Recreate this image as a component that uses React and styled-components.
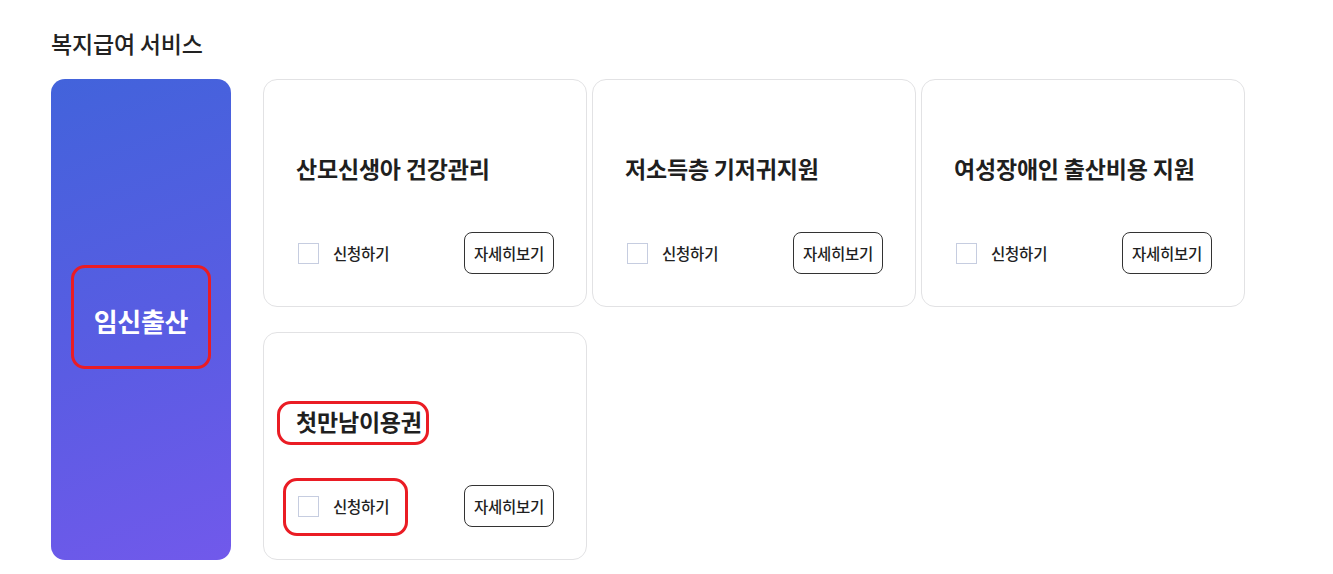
import React from "react";
import styled, { createGlobalStyle, css } from "styled-components";

const GlobalStyle = createGlobalStyle`
  html, body { margin: 0; padding: 0; background: #fff; }
  body {
    font-family: "Noto Sans CJK KR", "Noto Sans", sans-serif;
    color: #1f1f1f;
    -webkit-font-smoothing: antialiased;
  }
  * { box-sizing: border-box; }
`;

const Page = styled.main`
  padding: 28px 51px;
`;

const Heading = styled.h2`
  margin: 0 0 21px;
  font-size: 23px;
  line-height: 30px;
  font-weight: 500;
  color: #222;
  letter-spacing: -0.2px;
`;

const Layout = styled.div`
  display: grid;
  grid-template-columns: 180px 981px;
  column-gap: 32px;
`;

const annotated = css`
  position: relative;
  &::after {
    content: "";
    position: absolute;
    border: 3.5px solid #ea1c24;
    border-radius: 14px;
    pointer-events: none;
  }
`;

const CategoryPanel = styled.section`
  border-radius: 14px;
  background: linear-gradient(160deg, #4263db 0%, #5a5ce3 55%, #7159eb 100%);
  display: flex;
  align-items: center;
  justify-content: center;
  padding-top: 2px;
`;

const CategoryLabel = styled.span`
  ${annotated}
  color: #fff;
  font-size: 26px;
  line-height: 34px;
  font-weight: 700;
  letter-spacing: -0.3px;
  &::after {
    inset: -39px -23px -31px -23px;
  }
`;

const CardGrid = styled.div`
  display: grid;
  grid-template-columns: repeat(3, 324px);
  grid-auto-rows: 228px;
  column-gap: 5px;
  row-gap: 25px;
`;

const Card = styled.article`
  border: 1px solid #e2e2e4;
  border-radius: 14px;
  padding: 73px 32px 32px;
  display: flex;
  flex-direction: column;
  background: #fff;
`;

const CardTitle = styled.h3`
  margin: 0 0 49px;
  font-size: 23px;
  line-height: 30px;
  font-weight: 700;
  color: #1f1f1f;
  letter-spacing: -0.2px;
  align-self: flex-start;
  ${({ $marked }) =>
    $marked &&
    css`
      ${annotated}
      &::after {
        inset: -5px -7px -9px -19px;
      }
    `}
`;

const ActionRow = styled.div`
  display: flex;
  align-items: center;
  justify-content: space-between;
  height: 42px;
`;

const ApplyLabel = styled.label`
  display: flex;
  align-items: center;
  gap: 14px;
  margin-left: 2px;
  cursor: pointer;
  ${({ $marked }) =>
    $marked &&
    css`
      ${annotated}
      &::after {
        inset: -17px -19px -19px -15px;
      }
    `}
`;

const Checkbox = styled.span`
  width: 21px;
  height: 21px;
  border: 1px solid #c6cde0;
  background: #fff;
  display: inline-block;
`;

const ApplyText = styled.span`
  font-size: 15.5px;
  line-height: 22px;
  font-weight: 500;
  color: #222;
  letter-spacing: -0.2px;
`;

const DetailButton = styled.button`
  width: 90px;
  height: 42px;
  border: 1px solid #333;
  border-radius: 8px;
  background: #fff;
  font-family: inherit;
  font-size: 15.5px;
  font-weight: 500;
  color: #1f1f1f;
  letter-spacing: -0.3px;
  padding: 0;
  cursor: pointer;
`;

const services = [
  { title: "산모신생아 건강관리" },
  { title: "저소득층 기저귀지원" },
  { title: "여성장애인 출산비용 지원" },
  { title: "첫만남이용권", marked: true },
];

export default function App() {
  return (
    <>
      <GlobalStyle />
      <Page>
        <Heading>복지급여 서비스</Heading>
        <Layout>
          <CategoryPanel>
            <CategoryLabel>임신출산</CategoryLabel>
          </CategoryPanel>
          <CardGrid>
            {services.map((s) => (
              <Card key={s.title}>
                <CardTitle $marked={s.marked}>{s.title}</CardTitle>
                <ActionRow>
                  <ApplyLabel $marked={s.marked}>
                    <Checkbox />
                    <ApplyText>신청하기</ApplyText>
                  </ApplyLabel>
                  <DetailButton>자세히보기</DetailButton>
                </ActionRow>
              </Card>
            ))}
          </CardGrid>
        </Layout>
      </Page>
    </>
  );
}
